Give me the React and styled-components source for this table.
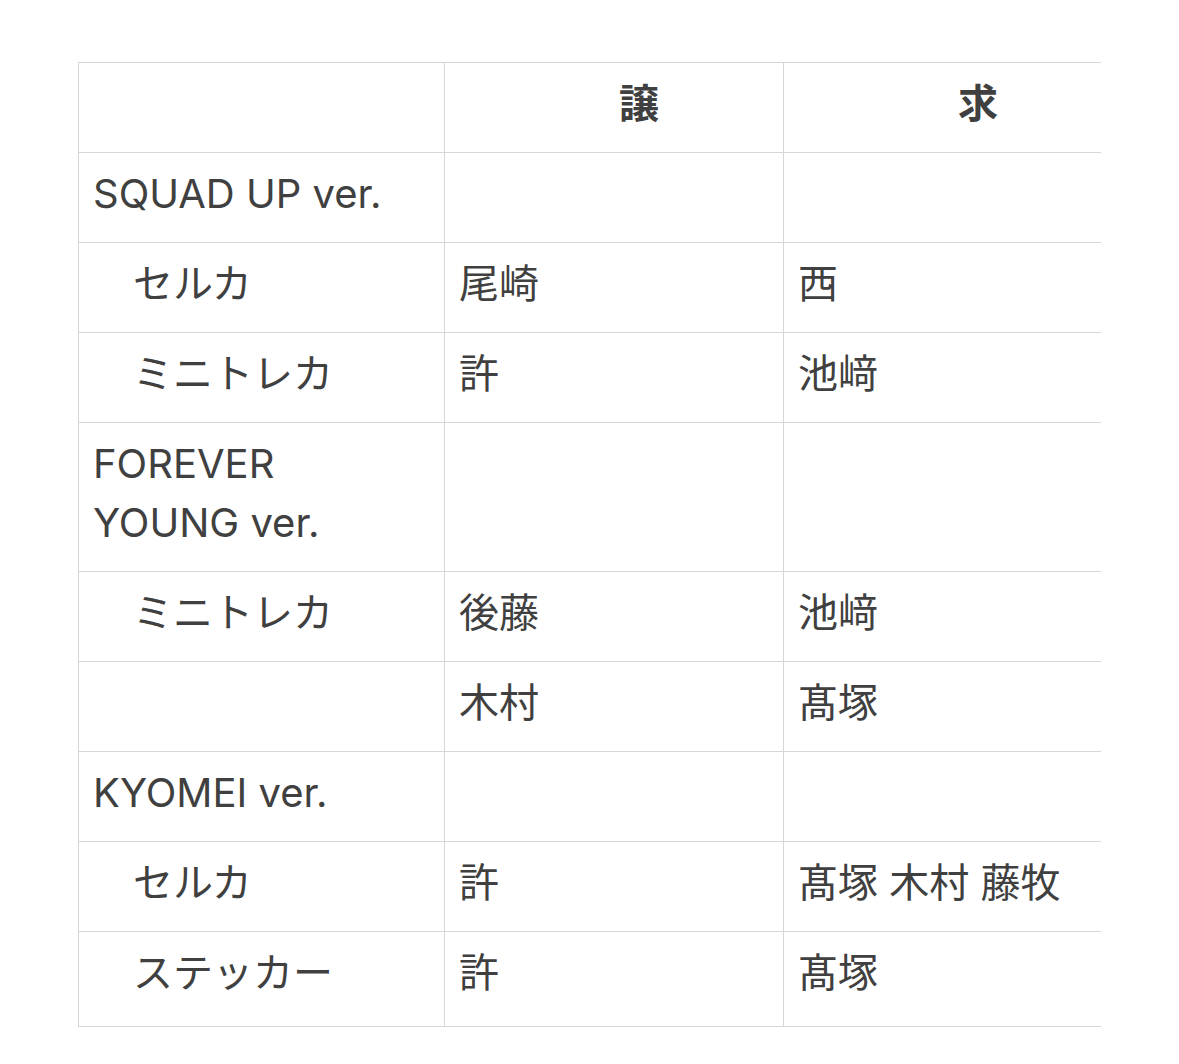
import React from 'react';
import styled, { createGlobalStyle } from 'styled-components';

const GlobalStyle = createGlobalStyle`
  body {
    margin: 0;
    background: #ffffff;
  }
`;

const lineGrey = '#d6d6da';
const inkGrey = '#404040';

const Page = styled.div`
  padding: 62px 0 0 78px;
  font-family: Inter, "Noto Sans CJK JP", sans-serif;
  color: ${inkGrey};
`;

const ScrollBox = styled.div`
  width: 1023px;
  overflow: hidden;
`;

const Table = styled.table`
  border-collapse: collapse;
  table-layout: fixed;
  width: 1090px;
  font-size: 40px;
  line-height: 59px;
`;

const HeadCell = styled.th`
  border: 1px solid ${lineGrey};
  padding: 11px 14px 19px 14px;
  text-align: left;
  font-weight: 700;
  white-space: pre;
`;

const Cell = styled.td`
  border: 1px solid ${lineGrey};
  padding: 11px 14px ${(p) => (p.$last ? '24px' : '19px')} 14px;
  vertical-align: top;
  white-space: pre-wrap;
`;

// ideographic space, used for the indented sub rows
const IND = '\u3000';

const rows = [
  { label: 'SQUAD UP ver.', give: '', want: '' },
  { label: IND + 'セルカ', give: '尾崎', want: '西' },
  { label: IND + 'ミニトレカ', give: '許', want: '池﨑' },
  { label: 'FOREVER\nYOUNG ver.', give: '', want: '' },
  { label: IND + 'ミニトレカ', give: '後藤', want: '池﨑' },
  { label: '', give: '木村', want: '髙塚' },
  { label: 'KYOMEI ver.', give: '', want: '' },
  { label: IND + 'セルカ', give: '許', want: '髙塚 木村 藤牧' },
  { label: IND + 'ステッカー', give: '許', want: '髙塚' },
];

const App = () => {
  return (
    <Page>
      <GlobalStyle />
      <ScrollBox>
        <Table>
          <colgroup>
            <col style={{ width: 366 }} />
            <col style={{ width: 339 }} />
            <col style={{ width: 385 }} />
          </colgroup>
          <thead>
            <tr>
              <HeadCell></HeadCell>
              <HeadCell>{IND.repeat(4) + '譲'}</HeadCell>
              <HeadCell>{IND.repeat(4) + '求'}</HeadCell>
            </tr>
          </thead>
          <tbody>
            {rows.map((r, i) => {
              const last = i === rows.length - 1;
              return (
                <tr key={i}>
                  <Cell $last={last}>{r.label}</Cell>
                  <Cell $last={last}>{r.give}</Cell>
                  <Cell $last={last}>{r.want}</Cell>
                </tr>
              );
            })}
          </tbody>
        </Table>
      </ScrollBox>
    </Page>
  );
};

export default App;
